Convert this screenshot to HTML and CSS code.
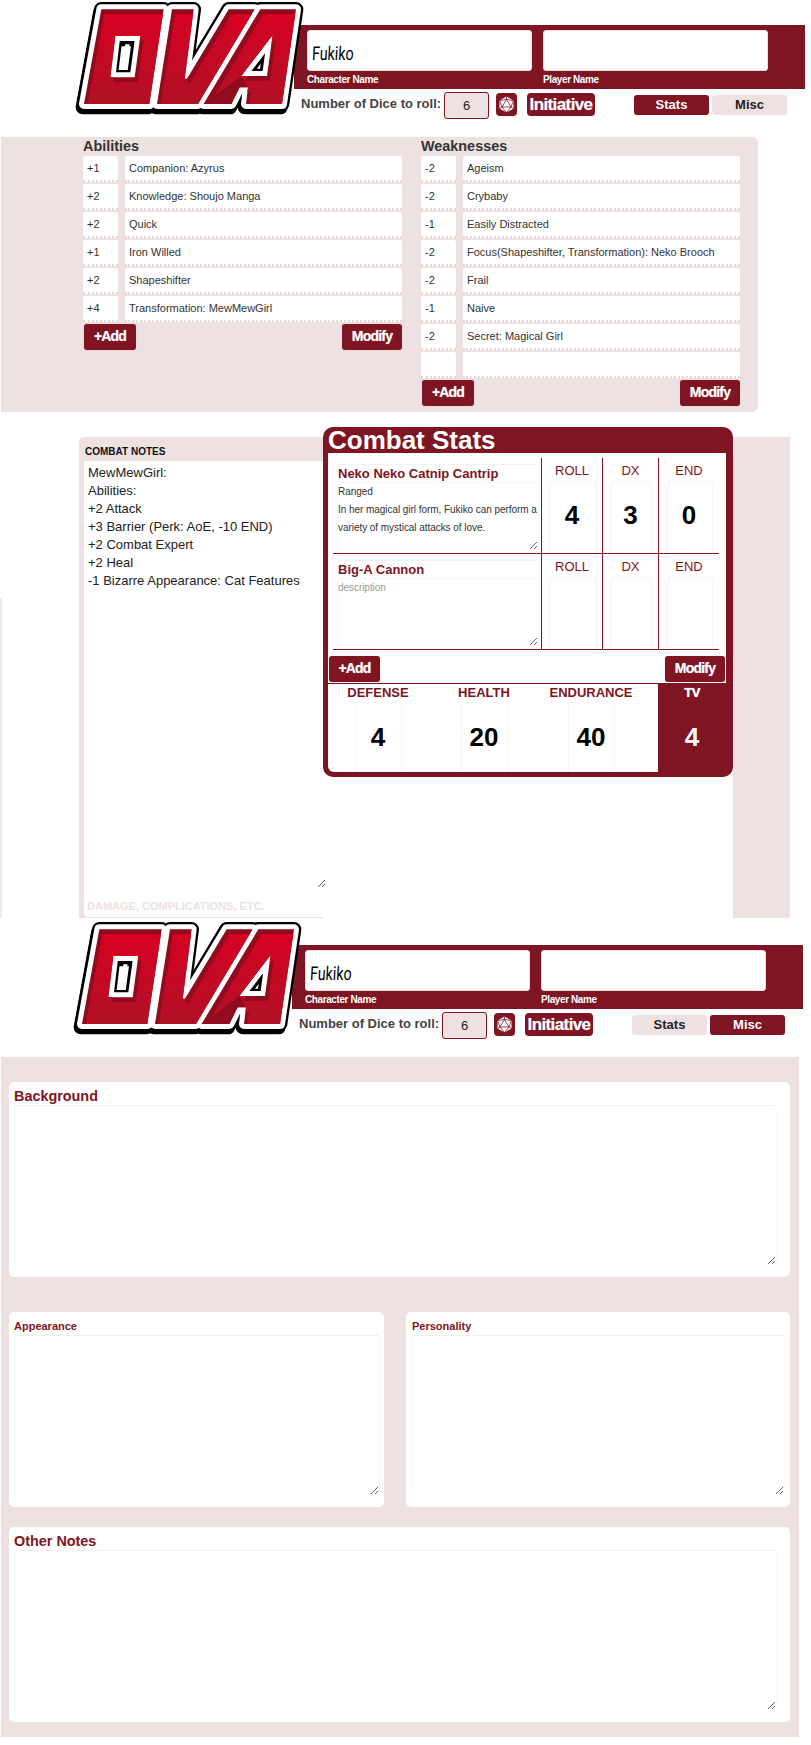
FILE: index.html
```html
<!DOCTYPE html>
<html lang="en">
<head>
<meta charset="utf-8">
<title>OVA Character Sheet</title>
<link rel="stylesheet" href="styles.css">
</head>
<body>
<svg class="defs" width="0" height="0" aria-hidden="true">
  <defs>
    <path id="ova" fill-rule="evenodd" clip-rule="evenodd" d="M88 28H275L232 312H36ZM130 108L115 232H188L205 108ZM300 28H365L338 236H345L470 28H548L378 312H255ZM565 28H672L630 312H522L528 262H503L478 312H395ZM602 105L508 228H585Z"/>
    <clipPath id="ova-clip"><use href="#ova"/></clipPath>
    <linearGradient id="ova-face" x1="0" y1="0" x2="0" y2="1">
      <stop offset="0" stop-color="#d60022"/>
      <stop offset="1" stop-color="#af1226"/>
    </linearGradient>
    <symbol id="logo" viewBox="0 0 720 375">
      <use href="#ova" fill="#000" stroke="#000" stroke-width="42" stroke-linejoin="round" transform="translate(-4 10)"/>
      <use href="#ova" fill="#000" stroke="#000" stroke-width="44" stroke-linejoin="round"/>
      <use href="#ova" fill="#fff" stroke="#fff" stroke-width="30" stroke-linejoin="round"/>
      <path d="M160 133H173L159 206H147Z" fill="#fff"/>
      <use href="#ova" fill="#8f0b1d"/>
      <g clip-path="url(#ova-clip)">
        <use href="#ova" fill="url(#ova-face)" transform="translate(9 14)"/>
        <path d="M395 312L508 228L528 262H503L478 312Z" fill="#8f0b1d"/>
      </g>
    </symbol>
    <symbol id="d20" viewBox="0 0 21 23">
      <path d="M10.5 3.5L17.5 7.5V15.5L10.5 19.5L3.5 15.5V7.5Z" fill="#fff"/>
      <path d="M10.5 6.5L15 14H6ZM10.5 3.5V6.5M3.5 7.5L6 14M17.5 7.5L15 14M10.5 19.5L6 14M10.5 19.5L15 14M3.5 7.5L10.5 6.5L17.5 7.5M3.5 15.5L6 14M17.5 15.5L15 14" fill="none" stroke="#7f1422" stroke-width=".8"/>
    </symbol>
  </defs>
</svg>

<section class="sheet">
  <header class="head">
    <svg class="logo" role="img" aria-label="OVA"><use href="#logo"/></svg>
    <div class="head-main">
      <div class="bar">
        <div class="name-field"><div class="name-box"><span class="hand">Fukiko</span></div><div class="name-label">Character Name</div></div>
        <div class="name-field"><div class="name-box"></div><div class="name-label">Player Name</div></div>
      </div>
      <div class="roller">
        <span class="roll-label">Number of Dice to roll:</span>
        <span class="dice-count">6</span>
        <span class="dice-btn"><svg class="d20"><use href="#d20"/></svg></span>
        <span class="init-btn">Initiative</span>
        <span class="tab tab-first tab-on">Stats</span>
        <span class="tab">Misc</span>
      </div>
    </div>
  </header>

  <div class="traits">
    <div class="trait-col">
      <h2 class="trait-title">Abilities</h2>
      <div class="trait-row"><div class="cell">+1</div><div class="cell">Companion: Azyrus</div></div>
      <div class="trait-row"><div class="cell">+2</div><div class="cell">Knowledge: Shoujo Manga</div></div>
      <div class="trait-row"><div class="cell">+2</div><div class="cell">Quick</div></div>
      <div class="trait-row"><div class="cell">+1</div><div class="cell">Iron Willed</div></div>
      <div class="trait-row"><div class="cell">+2</div><div class="cell">Shapeshifter</div></div>
      <div class="trait-row"><div class="cell">+4</div><div class="cell">Transformation: MewMewGirl</div></div>
      <div class="btn-row"><span class="btn btn-add">+Add</span><span class="btn btn-mod">Modify</span></div>
    </div>
    <div class="trait-col">
      <h2 class="trait-title">Weaknesses</h2>
      <div class="trait-row"><div class="cell">-2</div><div class="cell">Ageism</div></div>
      <div class="trait-row"><div class="cell">-2</div><div class="cell">Crybaby</div></div>
      <div class="trait-row"><div class="cell">-1</div><div class="cell">Easily Distracted</div></div>
      <div class="trait-row"><div class="cell">-2</div><div class="cell">Focus(Shapeshifter, Transformation): Neko Brooch</div></div>
      <div class="trait-row"><div class="cell">-2</div><div class="cell">Frail</div></div>
      <div class="trait-row"><div class="cell">-1</div><div class="cell">Naive</div></div>
      <div class="trait-row"><div class="cell">-2</div><div class="cell">Secret: Magical Girl</div></div>
      <div class="trait-row"><div class="cell"></div><div class="cell"></div></div>
      <div class="btn-row"><span class="btn btn-add">+Add</span><span class="btn btn-mod">Modify</span></div>
    </div>
  </div>

  <div class="combat">
    <div class="edge"></div>
    <div class="notes">
      <div class="notes-title">COMBAT NOTES</div>
      <div class="notes-body">
        <textarea class="notes-text">MewMewGirl:
Abilities:
+2 Attack
+3 Barrier (Perk: AoE, -10 END)
+2 Combat Expert
+2 Heal
-1 Bizarre Appearance: Cat Features</textarea>
        <div class="notes-hint">DAMAGE, COMPLICATIONS, ETC.</div>
      </div>
    </div>
    <div class="stats">
      <h2 class="stats-title">Combat Stats</h2>
      <div class="attacks">
        <div class="attack">
          <div class="attack-main">
            <div class="attack-name">Neko Neko Catnip Cantrip</div>
            <textarea class="attack-desc">Ranged
In her magical girl form, Fukiko can perform a variety of mystical attacks of love.</textarea>
          </div>
          <div class="stat"><div class="stat-label">ROLL</div><div class="stat-box">4</div></div>
          <div class="stat"><div class="stat-label">DX</div><div class="stat-box">3</div></div>
          <div class="stat"><div class="stat-label">END</div><div class="stat-box">0</div></div>
        </div>
        <div class="attack">
          <div class="attack-main">
            <div class="attack-name">Big-A Cannon</div>
            <textarea class="attack-desc muted">description</textarea>
          </div>
          <div class="stat"><div class="stat-label">ROLL</div><div class="stat-box"></div></div>
          <div class="stat"><div class="stat-label">DX</div><div class="stat-box"></div></div>
          <div class="stat"><div class="stat-label">END</div><div class="stat-box"></div></div>
        </div>
        <div class="attack-btns"><span class="btn btn-add-c">+Add</span><span class="btn btn-mod-c">Modify</span></div>
      </div>
      <div class="totals">
        <div class="totals-main">
          <div class="total"><div class="total-label">DEFENSE</div><div class="total-box">4</div></div>
          <div class="total"><div class="total-label">HEALTH</div><div class="total-box">20</div></div>
          <div class="total"><div class="total-label">ENDURANCE</div><div class="total-box">40</div></div>
        </div>
        <div class="total total-tv"><div class="total-label">TV</div><div class="total-box">4</div></div>
      </div>
    </div>
    <div class="combat-side"></div>
  </div>
</section>

<section class="sheet">
  <header class="head head-second">
    <svg class="logo" role="img" aria-label="OVA"><use href="#logo"/></svg>
    <div class="head-main">
      <div class="bar">
        <div class="name-field"><div class="name-box"><span class="hand">Fukiko</span></div><div class="name-label">Character Name</div></div>
        <div class="name-field"><div class="name-box"></div><div class="name-label">Player Name</div></div>
      </div>
      <div class="roller">
        <span class="roll-label">Number of Dice to roll:</span>
        <span class="dice-count">6</span>
        <span class="dice-btn"><svg class="d20"><use href="#d20"/></svg></span>
        <span class="init-btn">Initiative</span>
        <span class="tab tab-first">Stats</span>
        <span class="tab tab-on">Misc</span>
      </div>
    </div>
  </header>

  <div class="misc">
    <div class="card">
      <h2 class="card-title">Background</h2>
      <textarea class="card-text card-text-wide"></textarea>
    </div>
    <div class="card-pair">
      <div class="card card-half">
        <h3 class="card-sub">Appearance</h3>
        <textarea class="card-text card-text-left"></textarea>
      </div>
      <div class="card card-half card-half-right">
        <h3 class="card-sub">Personality</h3>
        <textarea class="card-text card-text-right"></textarea>
      </div>
    </div>
    <div class="card card-last">
      <h2 class="card-title">Other Notes</h2>
      <textarea class="card-text card-text-wide"></textarea>
    </div>
  </div>
</section>
</body>
</html>
```

FILE: styles.css
```css
* { box-sizing: border-box; }
html, body { margin: 0; padding: 0; background: #fff; }
body { font-family: "Liberation Sans", Arial, sans-serif; color: #333; overflow-x: hidden; }
h2, h3 { margin: 0; }
textarea { display: block; font-family: inherit; outline: none; margin: 0; background: #fff; }
.defs { position: absolute; }

/* header */
.head { display: flex; height: 137px; padding-left: 72px; }
.head-second { height: 139px; padding-left: 70px; padding-top: 2px; }
.logo { width: 240px; height: 125px; flex: none; margin-right: -18px; position: relative; z-index: 1; }
.head-main { margin-top: 25px; width: 511px; }
.bar { background: #7f1422; height: 64px; padding: 5px 0 0 13px; display: flex; gap: 11px; }
.name-field { width: 225px; }
.name-box { height: 41px; background: #fff; border-radius: 3px; border: 1px solid #e8e0e0; padding: 11px 0 0 4px; }
.hand { display: inline-block; font-family: Roboto, "Liberation Sans", sans-serif; font-size: 19px; font-weight: 400; line-height: 24px; color: #000; transform: scaleX(.75) skewX(-4deg); transform-origin: left center; }
.name-label { color: #fff; font-size: 10px; font-weight: 700; line-height: 18px; letter-spacing: -.4px; }
.roller { display: flex; align-items: flex-start; padding: 3px 0 0 7px; }
.roll-label { width: 143px; font-size: 13px; font-weight: 700; color: #444; line-height: 24px; white-space: nowrap; }
.dice-count { width: 45px; height: 27px; background: #eee1e1; border: 1px solid #7f1422; border-radius: 3px; text-align: center; font-size: 13px; line-height: 25px; color: #222; }
.dice-btn { width: 21px; height: 23px; margin: 1px 0 0 7px; background: #7f1422; border-radius: 4px; }
.d20 { display: block; width: 21px; height: 23px; }
.init-btn { width: 68px; height: 23px; margin: 1px 0 0 10px; background: #7f1422; border-radius: 4px; color: #fff; font-size: 17px; font-weight: 700; line-height: 24px; text-align: center; letter-spacing: -.6px; text-shadow: 0 0 1px rgba(255,255,255,.6); white-space: nowrap; }
.tab { width: 75px; height: 20px; margin: 3px 0 0 3px; border-radius: 3px; background: #eee1e1; color: #222; font-size: 13px; font-weight: 700; line-height: 20px; text-align: center; }
.tab-first { margin-left: 39px; }
.tab-on { background: #7f1422; color: #fff; }

/* abilities and weaknesses */
.traits { margin-left: 1px; width: 757px; height: 275px; background: #eee1e1; border-radius: 0 6px 6px 0; padding-left: 82px; display: flex; gap: 19px; }
.trait-col { width: 319px; }
.trait-title { font-size: 14.4px; font-weight: 700; color: #333; line-height: 19px; }
.trait-row { display: grid; grid-template-columns: 35px 277px; column-gap: 7px; height: 26px; margin-bottom: 2px; }
.cell { background: #fff; border-bottom: 2px dotted #e4d8d8; border-radius: 2px 2px 0 0; font-size: 11px; line-height: 24px; padding-left: 4px; color: #333; white-space: nowrap; }
.btn-row { display: flex; justify-content: space-between; padding-left: 1px; }
.btn { display: block; height: 26px; background: #7f1422; color: #fff; border-radius: 3px; font-size: 14px; font-weight: 700; line-height: 25px; text-align: center; letter-spacing: -.8px; text-shadow: 0 0 1px rgba(255,255,255,.6); box-shadow: 0 0 1px #b9a9a9; }
.btn-add { width: 52px; }
.btn-mod { width: 60px; }

/* combat */
.combat { display: flex; height: 491px; margin-top: 15px; }
.edge { width: 2px; margin: 171px 77px 0 0; background: #f3e8e8; }
.notes { width: 245px; margin-top: 10px; background: #eee1e1; border-radius: 5px 0 0 0; padding: 0 0 1px 5px; display: flex; flex-direction: column; }
.notes-title { height: 24px; font-size: 10px; font-weight: 700; line-height: 30px; color: #111; padding-left: 1px; }
.notes-body { flex: 1; background: #fff; border-radius: 4px 0 0 4px; }
.notes-text { width: 242px; height: 427px; border: 0; padding: 3px 4px 0; font-size: 13px; line-height: 18px; color: #222; }
.notes-hint { font-size: 11px; font-weight: 700; color: #eee1e1; padding: 12px 0 0 3px; line-height: 13px; white-space: nowrap; }
.stats { width: 410px; height: 350px; margin-left: -1px; position: relative; z-index: 1; background: #7f1422; border-radius: 10px; padding: 0 7px 5px 5px; }
.stats-title { height: 26px; color: #fff; font-size: 26px; font-weight: 700; line-height: 27px; white-space: nowrap; }
.attacks { height: 230px; background: #fff; padding-top: 5px; }
.attack { display: grid; grid-template-columns: 208px 61px 56px 61px; height: 96px; margin: 0 7px 0 5px; border-bottom: 1px solid #7f1422; }
.attack-main { padding: 6px 0 0 4px; }
.attack-name { height: 18px; width: 201px; padding-left: 1px; border-top: 1px solid #f6f2f2; border-radius: 3px 3px 0 0; color: #7f1422; font-size: 13px; font-weight: 700; line-height: 17px; white-space: nowrap; }
.attack-desc { width: 202px; height: 68px; padding: 0; border: 1px solid #f9f6f6; border-bottom: 0; border-radius: 3px 3px 0 0; font-size: 10px; letter-spacing: -.05px; line-height: 18px; color: #333; overflow: hidden; }
.muted { color: #999; }
.stat { border-left: 1px solid #7f1422; padding: 0 6.5px; }
.stat-label { height: 23px; color: #7f1422; font-size: 13px; line-height: 26px; text-align: center; }
.stat-box { height: 72px; border: 1px solid #f9f6f6; border-bottom: 0; border-radius: 3px 3px 0 0; color: #000; font-size: 26px; font-weight: 700; line-height: 67px; text-align: center; }
.attack-btns { display: flex; justify-content: space-between; padding: 6px 1px 0; }
.btn-add-c { width: 51px; }
.btn-mod-c { width: 60px; }
.totals { display: flex; margin-top: 1px; height: 88px; }
.totals-main { width: 330px; padding-right: 16px; display: grid; grid-template-columns: 100px 112px 102px; background: #fff; border-radius: 0 0 0 6px; }
.total-label { height: 18px; color: #7f1422; font-size: 13px; font-weight: 700; line-height: 18px; text-align: center; white-space: nowrap; }
.total-box { width: 47px; height: 70px; margin: 0 auto; border: 1px solid #f9f6f6; border-bottom: 0; border-radius: 3px 3px 0 0; color: #000; font-size: 26px; font-weight: 700; line-height: 68px; text-align: center; }
.total-tv { width: 68px; }
.total-tv .total-label { color: #fff; letter-spacing: -.5px; text-shadow: 0 0 1px #fff; }
.total-tv .total-box { color: #fff; border-color: #7a1320; }
.combat-side { width: 57px; margin-top: 10px; background: #eee1e1; }

/* misc */
.misc { margin-left: 1px; width: 798px; height: 680px; background: #eee1e1; padding: 25px 9px 15px 8px; }
.card { height: 195px; background: #fff; border-radius: 5px; padding-left: 5px; }
.card-last { margin-top: 20px; }
.card-pair { display: flex; gap: 22px; margin-top: 35px; }
.card-half { width: 375px; }
.card-half-right { width: 384px; padding-left: 6px; }
.card-title { height: 23px; color: #7f1422; font-size: 14.4px; font-weight: 700; line-height: 29px; }
.card-sub { height: 23px; color: #7f1422; font-size: 11px; font-weight: 700; line-height: 28px; }
.card-text { height: 160px; border: 1px solid #fbfafa; border-top: 1px solid #f3efef; border-bottom: 0; border-radius: 3px; padding: 2px; }
.card-text-wide { width: 763px; }
.card-text-left { width: 366px; }
.card-text-right { width: 373px; }
```
